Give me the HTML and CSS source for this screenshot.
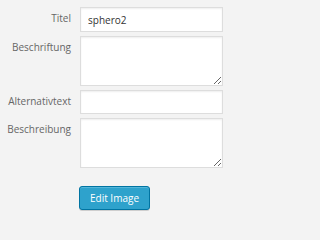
FILE: index.html
```html
<!DOCTYPE html>
<html>
<head>
<meta charset="utf-8">
<link rel="stylesheet" href="styles.css">
</head>
<body>
<div class="panel">
  <form class="form">
    <label class="label" for="f-title">Titel</label>
    <input class="field input" id="f-title" type="text" value="sphero2">
    <label class="label" for="f-caption">Beschriftung</label>
    <textarea class="field area" id="f-caption"></textarea>
    <label class="label" for="f-alt">Alternativtext</label>
    <input class="field input alt" id="f-alt" type="text">
    <label class="label" for="f-desc">Beschreibung</label>
    <textarea class="field area" id="f-desc"></textarea>
  </form>
  <div class="actions">
    <button class="btn-primary" type="button">Edit Image</button>
  </div>
</div>
</body>
</html>
```

FILE: styles.css
```css
html, body {
  margin: 0;
  padding: 0;
  background: #f3f3f3;
}
body {
  font-family: "Open Sans", "Liberation Sans", sans-serif;
  font-size: 10px;
  width: 230px;
  height: 219px;
  overflow: hidden;
}
.panel {
  padding-top: 7px;
}
.form {
  display: grid;
  grid-template-columns: 71px 143px;
  column-gap: 9px;
  row-gap: 4px;
  margin: 0;
}
.label {
  text-align: right;
  color: #666;
  line-height: 14px;
  padding-top: 4px;
}
.field {
  box-sizing: border-box;
  margin: 0;
  width: 143px;
  border: 1px solid #ddd;
  background: #fff;
  box-shadow: inset 0 1px 2px rgba(0,0,0,0.07);
  font-family: "Open Sans", "Liberation Sans", sans-serif;
  font-size: 10px;
  color: #333;
  outline: none;
}
.input {
  height: 25px;
  padding: 0 7px;
}
.input.alt {
  height: 24px;
}
.area {
  height: 50px;
  padding: 3px 6px;
  resize: vertical;
  display: block;
}
.actions {
  padding-left: 79px;
  margin-top: 18px;
}
.btn-primary {
  box-sizing: border-box;
  height: 24px;
  width: 71px;
  padding: 0;
  border: 1px solid #0074a2;
  border-radius: 3px;
  background: #2ea2cc;
  box-shadow: inset 0 1px 0 rgba(120,200,230,0.5), 0 1px 0 rgba(0,0,0,0.15);
  color: #fff;
  font-family: "Open Sans", "Liberation Sans", sans-serif;
  font-size: 10px;
  line-height: 22px;
}
```
